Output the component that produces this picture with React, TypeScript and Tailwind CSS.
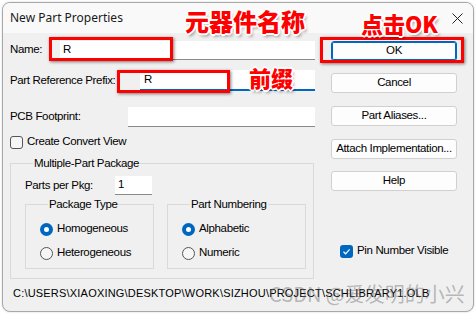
import React from "react";

const ui = "font-['Liberation_Sans',Arial,sans-serif] text-[11.5px] tracking-[-0.35px] text-black";

function Btn({ label, primary = false }: { label: string; primary?: boolean }) {
  return (
    <div
      className={
        "flex h-[20px] w-[126px] items-center justify-center whitespace-nowrap rounded-[3px] border bg-[#fdfdfd] leading-none " +
        (primary ? "border-[#0067c0] shadow-[inset_0_0_0_1px_#0067c0]" : "border-[#d0d0d0]")
      }
    >
      {label}
    </div>
  );
}

function Radio({ label, checked = false }: { label: string; checked?: boolean }) {
  return (
    <div className="flex h-[14px] items-center gap-[4px] leading-none">
      {checked ? (
        <span className="flex h-[13px] w-[13px] items-center justify-center rounded-full bg-[#0067c0]">
          <span className="h-[5px] w-[5px] rounded-full bg-white" />
        </span>
      ) : (
        <span className="h-[13px] w-[13px] rounded-full border border-[#555] bg-[#f6f6f6]" />
      )}
      <span>{label}</span>
    </div>
  );
}

function Check({ label, checked = false }: { label: string; checked?: boolean }) {
  return (
    <div className="flex h-[14px] items-center gap-[4px] whitespace-nowrap leading-none">
      {checked ? (
        <span className="flex h-[13px] w-[13px] items-center justify-center rounded-[3px] bg-[#0067c0]">
          <svg width="9" height="9" viewBox="0 0 9 9">
            <path d="M1.5 4.8 L3.6 6.8 L7.6 2.4" fill="none" stroke="white" strokeWidth="1.2" />
          </svg>
        </span>
      ) : (
        <span className="h-[13px] w-[13px] rounded-[3px] border border-[#555] bg-[#f6f6f6]" />
      )}
      <span>{label}</span>
    </div>
  );
}

function Group({ title, className, children }: { title: string; className: string; children: React.ReactNode }) {
  return (
    <fieldset className={"border border-[#d9d9d9] " + className}>
      <legend className="ml-[8px] px-[1px] leading-[13px]">{title}</legend>
      {children}
    </fieldset>
  );
}

const note =
  "font-['Noto_Sans_CJK_SC',sans-serif] font-black text-[#ff0000] leading-none tracking-normal whitespace-nowrap [text-shadow:0_0_1px_#fff,1px_1px_0_#fff,-1px_-1px_0_#fff,1px_-1px_0_#fff,-1px_1px_0_#fff,2px_0_0_#fff,-2px_0_0_#fff,0_2px_0_#fff,0_-2px_0_#fff,2px_3px_3px_rgba(0,0,0,0.35)]";

export default function App() {
  return (
    <div className="relative h-[314px] w-[476px] overflow-hidden bg-white p-[2px]">
      <div className={"flex h-[310px] w-[472px] flex-col overflow-hidden rounded-[8px] border border-[#a8a8a8] bg-[#f0f0f0] shadow-[0_0_2px_rgba(0,0,0,0.2)] " + ui}>
        {/* title bar */}
        <div className="flex h-[30px] shrink-0 items-center justify-between bg-[#f9f9f9] pl-[7px] pr-[9px]">
          <span className="font-['Noto_Sans',sans-serif] text-[12px] tracking-normal text-[#1a1a1a]">New Part Properties</span>
          <svg width="11" height="11" viewBox="0 0 11 11" className="mr-[1px]">
            <path d="M0.5 0.5 L10.5 10.5 M10.5 0.5 L0.5 10.5" stroke="#222" strokeWidth="1" />
          </svg>
        </div>

        <div className="flex flex-1 flex-col pl-[7px]">
          <div className="flex">
            {/* left column */}
            <div className="flex w-[305px] flex-col pt-[7px]">
              <div className="flex h-[20px] items-center">
                <span className="w-[50px]">Name:</span>
                <div className="flex h-[19px] flex-1 items-center border-b border-[#8a8a8a] bg-white pl-[3px]">R</div>
              </div>
              <div className="mt-[10px] flex h-[21px] items-center">
                <span className="w-[130px]">Part Reference Prefix:</span>
                <div className="flex h-[21px] flex-1 items-center border-b-2 border-[#0067c0] bg-white pl-[4px]">R</div>
              </div>
              <div className="mt-[16px] flex h-[20px] items-center">
                <span className="w-[118px]">PCB Footprint:</span>
                <div className="h-[20px] flex-1 border-b border-[#8a8a8a] bg-white" />
              </div>
              <div className="mt-[8px]">
                <Check label="Create Convert View" />
              </div>
              <Group title="Multiple-Part Package" className="mt-[8px] h-[122px] w-[304px] pl-[14px]">
                <div className="mt-[6px] flex h-[19px] items-center">
                  <span className="w-[90px]">Parts per Pkg:</span>
                  <div className="flex h-[19px] w-[37px] items-center border-b border-[#8a8a8a] bg-white pl-[3px]">1</div>
                </div>
                <div className="mt-[3px] flex gap-[13px]">
                  <Group title="Package Type" className="h-[71px] w-[129px] pl-[14px]">
                    <div className="mt-[11px] flex flex-col gap-[10px]">
                      <Radio label="Homogeneous" checked />
                      <Radio label="Heterogeneous" />
                    </div>
                  </Group>
                  <Group title="Part Numbering" className="h-[71px] w-[139px] pl-[14px]">
                    <div className="mt-[11px] flex flex-col gap-[10px]">
                      <Radio label="Alphabetic" checked />
                      <Radio label="Numeric" />
                    </div>
                  </Group>
                </div>
              </Group>
            </div>

            {/* right column */}
            <div className="ml-[16px] flex flex-col pt-[8px]">
              <Btn label="OK" primary />
              <div className="mt-[12px]"><Btn label="Cancel" /></div>
              <div className="mt-[13px]"><Btn label="Part Aliases..." /></div>
              <div className="mt-[13px]"><Btn label="Attach Implementation..." /></div>
              <div className="mt-[12px]"><Btn label="Help" /></div>
              <div className="ml-[9px] mt-[53px]">
                <Check label="Pin Number Visible" checked />
              </div>
            </div>
          </div>

          <div className="mt-[7px] whitespace-nowrap pl-[3px] text-[11px] leading-[14px] tracking-[0.2px]">
            C:\USERS\XIAOXING\DESKTOP\WORK\SIZHOU\PROJECT\SCHLIBRARY1.OLB
          </div>
        </div>
      </div>

      {/* annotations */}
      <div className="absolute left-[49px] top-[37px] h-[24px] w-[124px] border-[3px] border-[#ff0000] shadow-[1px_1px_3px_rgba(0,0,0,0.5)]" />
      <div className="absolute left-[117px] top-[70px] h-[23px] w-[113px] border-[3px] border-[#ff0000] shadow-[1px_1px_3px_rgba(0,0,0,0.5)]" />
      <div className="absolute left-[320px] top-[37px] h-[26px] w-[144px] border-[3px] border-[#ff0000] shadow-[1px_1px_3px_rgba(0,0,0,0.5)]" />
      <div className={"absolute left-[185px] top-[9px] text-[24px] " + note}>元器件名称</div>
      <div className={"absolute left-[361px] top-[12px] text-[22px] " + note}>点击OK</div>
      <div className={"absolute left-[249px] top-[66px] text-[22px] " + note}>前缀</div>
      <div className="absolute left-[269px] top-[284px] whitespace-nowrap font-['Noto_Sans_CJK_SC',sans-serif] text-[20px] leading-none text-[rgba(90,90,90,0.4)]">
        CSDN @爱发明的小兴
      </div>
    </div>
  );
}
